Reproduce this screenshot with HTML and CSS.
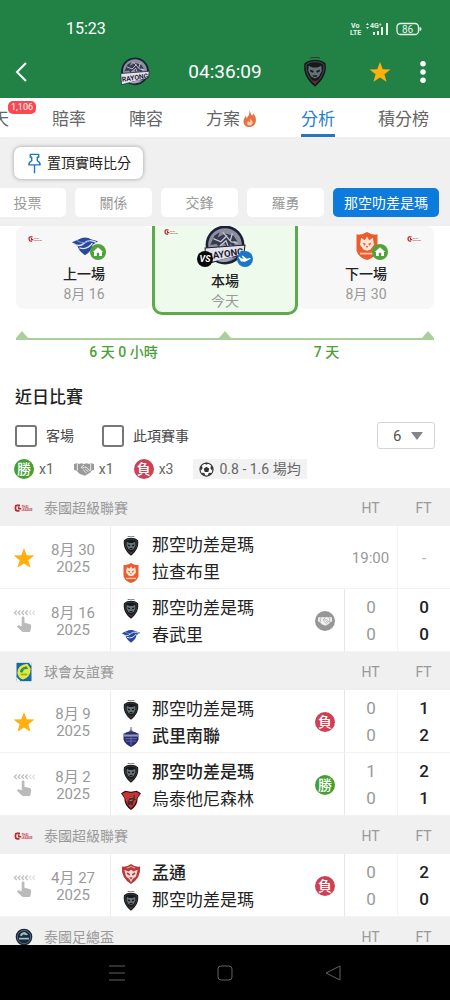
FILE: index.html
```html
<!DOCTYPE html>
<html lang="zh-Hant">

<head>
    <meta charset="UTF-8">
    <meta name="viewport" content="width=device-width, initial-scale=1">
    <title>分析</title>
    <link rel="stylesheet" href="styles.css">
</head>

<body>
    <!-- Icon sprite -->
    <svg class="sprite" aria-hidden="true">
        <symbol id="star" viewBox="0 0 24 24">
            <path fill="#ffb010" d="M12 1l3 7.900 8.400.400-6.600 5.200 2.300 8.200-7.100-4.700-7.100 4.700 2.300-8.200L.6 9.300l8.400-.4z" />
        </symbol>
        <symbol id="swipe" viewBox="0 0 24 24">
            <path fill="none" stroke="#bdbdbd" stroke-width="1.3" d="M4 .5L1.500 3 4 5.500M8 .5L5.500 3 8 5.500M12 .5L9.500 3 12 5.500M16 .5L13.500 3 16 5.500" />
            <path fill="none" stroke="#dedede" stroke-width="1.3" d="M20 .5L17.500 3 20 5.500M24 .5L21.500 3 24 5.500" />
            <path fill="#bababa" d="M9.500 8.500c0-2 3-2 3 0V14l5.500 1.300c1.500.4 2 1.200 1.800 2.700l-.7 4.500c-.2 1-.8 1.500-1.800 1.500h-6c-.8 0-1.300-.2-1.900-.8L4.200 18l.9-.9c.5-.5 1-.5 1.600-.3l2.800.8z" />
        </symbol>
        <symbol id="cobra" viewBox="0 0 24 24">
            <path fill="none" stroke="#333" stroke-width=".8" d="M8 .8q4-1.200 8 0" />
            <path fill="#15191b" d="M12 2.200c3 0 6.500 1 8.500 3 1 7-1.500 13-8.500 18.500C5 18.200 2.500 12.200 3.500 5.200c2-2 5.500-3 8.500-3z" />
            <path fill="none" stroke="#60686c" stroke-width=".5" d="M12 3.800c2.700 0 5.500.8 7 2.200.6 5.500-1.500 10.500-7 15.500C6.500 16.500 4.400 11.500 5 6c1.500-1.400 4.300-2.200 7-2.200z" />
            <path fill="#667176" d="M7 7l3 1.400h4L17 7l.4 4-2.200 4.500-3.200 1.600-3.200-1.600L6.600 11z" />
            <path fill="#15191b" d="M8 10l3 1.200-.6 1.300-2-.7zM16 10l-3 1.200.6 1.300 2-.7zM10 14.500h4l-.8 1.300h-2.400z" />
            <path fill="#b32b25" d="M9.500 18L12 19.500l2.500-1.500-2.500 2.800z" />
        </symbol>
        <symbol id="rayong" viewBox="0 0 40 40">
            <circle cx="20" cy="19" r="18.500" fill="#1b2039" />
            <circle cx="20" cy="19" r="16" fill="#8d8f9d" />
            <path fill="#363a52" d="M6 19l4-9 5-3-2 5 7-4 8 2 4 6-4-1 2 7-5-4-2 5-4-6-5 4-2-3z" />
            <path fill="none" stroke="#c9cad2" stroke-width="1.2" d="M9 13l7 3 6-6M18 7l8 9 6 1M15 20l6-5 3 8M27 8l-2 7" />
            <path fill="#e4e4ea" stroke="#1b2039" d="M1 22l38-3-1 9-36 9z" />
            <text x="3" y="33" class="crest-word" fill="#1b2039" transform="rotate(-8 3 33)">RAYONG</text>
            <path fill="#a2a4b0" d="M12 34q8-2 16-4-6 8-16 4z" />
        </symbol>
        <symbol id="chonburi" viewBox="0 0 30 24">
            <path fill="#2b489b" d="M8 5q7-4 14 0l7 2-6 4q0 6-8 11-7-5-8-10L1 8z" />
            <path fill="none" stroke="#dbe6fa" stroke-width="1.5" d="M2 9q7 5 12 0t13-1M9 14q8 3 14-5" />
            <path fill="none" stroke="#75a3df" stroke-width="1.2" d="M6 6q8 5 14 0" />
        </symbol>
        <symbol id="ratchaburi" viewBox="0 0 24 24">
            <path fill="#e95d31" d="M12 0q5 3 9 2v14q-2 6-9 8-7-2-9-8V2q4 1 9-2z" />
            <path fill="#ffe6d7" d="M7 5l3 2 2-3 2 3 3-2 1 6-3 4-3 1-3-1-3-4z" />
            <path fill="#e95d31" d="M8 9l3 1-1 2zM16 9l-3 1 1 2zM11 12h2l-1 2z" />
            <path stroke="#f8c4ab" stroke-width="1.5" d="M6 18.500h12" />
        </symbol>
        <symbol id="buriram" viewBox="0 0 24 24">
            <path stroke="#7c7f9d" stroke-width="1.4" d="M12 0v8" />
            <path fill="#7c7f9d" d="M9 6l3-4 3 4z" />
            <path fill="#292f72" d="M3 8q9-6 18 0v7q-2 6-9 9-7-3-9-9z" />
            <path fill="#9498bd" d="M3 9h18v2.500H3z" />
            <path fill="none" stroke="#7778a8" d="M5 14h14M6 17h12M12 12v10" />
        </symbol>
        <symbol id="uthai" viewBox="0 0 24 24">
            <path fill="#2c1717" d="M0 4l5-3 7 1 7-1 5 3-4 6q0 9-8 14-8-5-8-14z" />
            <path fill="#d22f35" d="M1.500 4.500L6 2.500l6 1 6-1 4.500 2L19 10q-1 7-7 12-6-5-7-12z" />
            <path fill="#4a2a26" d="M8 14l3-6 6-2-1 4 2 1-3 2-1 6-3-2-3 2z" />
            <path stroke="#a58669" stroke-width="1.2" d="M11 9l4-1M10 13l4-1" />
        </symbol>
        <symbol id="muangthong" viewBox="0 0 24 24">
            <path fill="#b93a38" d="M1 3q6 1 11-3 5 4 11 3 1 14-11 21Q0 17 1 3z" />
            <path fill="#f3dcd8" d="M4 7l5 2 3-2 3 2 5-2-2 8-4 3-2 4-2-4-4-3z" />
            <path fill="#b93a38" d="M7 10l4 2-1 2-3-2zM17 10l-4 2 1 2 3-2zM10 16h4l-2 3z" />
            <path stroke="#eba39c" stroke-width="1.2" d="M7 5l5-2 5 2" fill="none" />
        </symbol>
        <symbol id="thai-league" viewBox="0 0 40 16">
            <path fill="none" stroke="#b72a35" stroke-width="3.5" d="M12 2.500H6q-3 0-3 3v4q0 4 4 4h4" />
            <path fill="#b72a35" d="M8 5h3v3h3v3H8z" />
            <text x="15" y="8" class="league-word" fill="#c14049">THAI</text>
            <text x="15" y="14" class="league-word" fill="#c14049">LEAGUE</text>
        </symbol>
        <symbol id="friendly" viewBox="0 0 20 24">
            <path fill="#1866ab" d="M1 1h18v22H1z" />
            <path fill="#dfeb35" d="M2 13Q2 3 14 2l4 6q0 10-9 13-6-1-7-8z" />
            <path fill="#378d69" d="M5 12q1-6 8-7l2 3-5 1-2 4z" />
            <path fill="#8fae3f" d="M6 14h8v2H6z" />
            <path fill="#fff" d="M1 18l5 5H1zM16 1h3v4z" />
        </symbol>
        <symbol id="fa-cup" viewBox="0 0 24 24">
            <circle cx="12" cy="12" r="10" fill="#18293a" />
            <circle cx="12" cy="12" r="8" fill="none" stroke="#587181" />
            <path fill="#9dbbc7" d="M7 10q2-4 6-4l4 3-2 1-4-1-2 2zM6 13h12v2H6z" />
        </symbol>
        <symbol id="handshake" viewBox="0 0 24 16">
            <path fill="currentColor" d="M0 2l4-1 1 1 4-1 3 1 3-1 4 1 1-1 4 1v7l-3 1-1 2-2 1-1 1-2 1-2 1-3-1-3-1-4-4-3-1z" />
            <path class="handshake-line" fill="none" d="M4 2v8M20 2v8M12 3L8.500 6q1.500 2 4 0l2-.5 5 5M11 9l4 4M13.500 8l4 3.500" />
        </symbol>
        <symbol id="house" viewBox="0 0 20 20">
            <circle cx="10" cy="10" r="10" fill="#50a33a" />
            <path fill="#fff" d="M10 4l6.500 6H15v5h-3.500v-4h-3v4H5v-5H3.500z" />
        </symbol>
        <symbol id="plane" viewBox="0 0 20 20">
            <circle cx="10" cy="10" r="10" fill="#1976ca" />
            <path fill="#fff" d="M3 7l2 2.200 3 .4L5.500 6l2-.2 4.500 4 3.500-1q2-.2 1.500 1.200l-7 3.500-5-.5L2 8z" />
        </symbol>
        <symbol id="versus" viewBox="0 0 20 20">
            <circle cx="10" cy="10" r="10" fill="#080808" />
            <text x="10" y="14" class="versus-word" fill="#fff">VS</text>
        </symbol>
        <symbol id="fire" viewBox="0 0 20 24">
            <path fill="#e96f45" d="M9 0c2 3 1 5 4 8 1-1 1-2 1-3 4 3 5 8 4 12-1 5-5 7-9 7-5 0-9-4-8-9 0-3 2-4 3-7 1 1 1 2 1 4 3-3 5-7 4-12z" />
            <path fill="#ffd0a5" d="M10 12c3 3 5 5 3 8-2 3-7 2-7-1 0-2 1-3 2-4 0 1 0 2 1 2 1-1 2-3 1-5z" />
        </symbol>
        <symbol id="pin" viewBox="0 0 20 30">
            <path fill="none" stroke="#1c78c5" stroke-width="2" stroke-linejoin="round" d="M4 2h12v4h-2v5q4 2 4 6H2q0-4 4-6V6H4zM10 17v12" />
        </symbol>
        <symbol id="football" viewBox="0 0 24 24">
            <circle cx="12" cy="12" r="10.500" fill="#fff" stroke="#333" stroke-width="1.8" />
            <path fill="#333" d="M12 7.500l4.500 3.300-1.700 5.200H9.200l-1.700-5.200zM8 2l4 2.500L16 2l-4-1zM1.500 9l1.200 5 3-3.500L5 6zM22.500 9l-1.200 5-3-3.500L19 6zM5 19.500l5 2-1.500-4-4-.5zM19 19.500l-5 2 1.500-4 4-.5z" />
        </symbol>
    </svg>

    <header class="top">
        <div class="status">
            <span class="clock">15:23</span>
            <svg class="signal" viewBox="0 0 72 14" role="img" aria-label="Vo LTE 4G 86">
                <g fill="#e8f4ec">
                    <text x="1" y="6" class="status-small">Vo</text>
                    <text x="0" y="13" class="status-small">LTE</text>
                    <path d="M16 3l1.500-2L19 3zM16 5l1.500 2L19 5z" />
                    <text x="20" y="6" class="status-small">4G⁺</text>
                    <path d="M23 10h2v3h-2zM27 9h2v4h-2zM31 5h2v8h-2zM36 1h2v12h-2z" />
                    <path d="M69.500 5q2 0 2 2t-2 2z" />
                    <text x="57.500" y="10.500" class="status-level">86</text>
                </g>
                <rect x="47" y="1.500" width="21.500" height="11" rx="3.500" fill="none" stroke="#e8f4ec" stroke-width="1.3" />
            </svg>
        </div>
        <div class="appbar">
            <button class="icon-btn back" aria-label="返回">
                <svg viewBox="0 0 12 20"><path fill="none" stroke="#fff" stroke-width="2" d="M11 1L2 10l9 9" /></svg>
            </button>
            <div class="versus">
                <svg class="crest-top"><use href="#rayong" /></svg>
                <span class="countdown">04:36:09</span>
                <svg class="crest-top"><use href="#cobra" /></svg>
            </div>
            <button class="icon-btn favourite" aria-label="收藏"><svg><use href="#star" /></svg></button>
            <button class="icon-btn more" aria-label="更多">
                <svg viewBox="0 0 6 24" fill="#fff"><circle cx="3" cy="3" r="3" /><circle cx="3" cy="12" r="3" /><circle cx="3" cy="21" r="3" /></svg>
            </button>
        </div>
    </header>

    <nav class="tabs">
        <a href="#">天<span class="count">1,106</span></a>
        <a href="#">賠率</a>
        <a href="#">陣容</a>
        <a href="#">方案<svg class="fire"><use href="#fire" /></svg></a>
        <a href="#" class="current">分析</a>
        <a href="#">積分榜</a>
    </nav>

    <div class="filters">
        <button class="pin-btn"><svg><use href="#pin" /></svg>置頂實時比分</button>
        <div class="chips">
            <button class="chip">投票</button>
            <button class="chip">關係</button>
            <button class="chip">交鋒</button>
            <button class="chip">羅勇</button>
            <button class="chip active">那空叻差是瑪</button>
        </div>
    </div>

    <main>
        <section class="schedule">
            <div class="day">
                <svg class="league left"><use href="#thai-league" /></svg>
                <div class="day-crest"><svg class="crest-day"><use href="#chonburi" /></svg><svg class="venue"><use href="#house" /></svg></div>
                <strong>上一場</strong>
                <span>8月 16</span>
            </div>
            <div class="day today">
                <svg class="league left"><use href="#thai-league" /></svg>
                <div class="day-crest"><svg class="vs-mark"><use href="#versus" /></svg><svg class="crest-today"><use href="#rayong" /></svg><svg class="venue"><use href="#plane" /></svg></div>
                <strong>本場</strong>
                <span>今天</span>
            </div>
            <div class="day">
                <svg class="league right"><use href="#thai-league" /></svg>
                <div class="day-crest"><svg class="crest-day"><use href="#ratchaburi" /></svg><svg class="venue"><use href="#house" /></svg></div>
                <strong>下一場</strong>
                <span>8月 30</span>
            </div>
        </section>
        <div class="timeline"><i></i><i></i><i></i></div>
        <div class="intervals"><span>6 天 0 小時</span><span>7 天</span></div>

        <h2>近日比賽</h2>
        <div class="options">
            <label><input type="checkbox">客場</label>
            <label><input type="checkbox">此項賽事</label>
            <div class="amount">
                <select aria-label="場數">
                    <option>6</option>
                    <option>10</option>
                </select>
                <svg viewBox="0 0 12 8"><path fill="#858585" d="M0 0h12L6 8z" /></svg>
            </div>
        </div>
        <div class="summary">
            <span><b class="result win">勝</b>x1</span>
            <span><svg class="draws"><use href="#handshake" /></svg>x1</span>
            <span><b class="result loss">負</b>x3</span>
            <span class="average"><svg><use href="#football" /></svg>0.8 - 1.6 場均</span>
        </div>

        <table>
            <colgroup>
                <col class="col-mark">
                <col class="col-date">
                <col>
                <col class="col-result">
                <col class="col-score">
                <col class="col-score">
            </colgroup>
            <tbody>
                <tr class="group">
                    <th colspan="4"><div><svg><use href="#thai-league" /></svg>泰國超級聯賽</div></th>
                    <th>HT</th>
                    <th>FT</th>
                </tr>
                <tr>
                    <td class="mark"><svg><use href="#star" /></svg></td>
                    <td class="date">8月 30<br>2025</td>
                    <td colspan="2" class="teams">
                        <div><svg><use href="#cobra" /></svg>那空叻差是瑪</div>
                        <div><svg><use href="#ratchaburi" /></svg>拉查布里</div>
                    </td>
                    <td class="kickoff">19:00</td>
                    <td class="ft none">-</td>
                </tr>
                <tr>
                    <td class="mark"><svg><use href="#swipe" /></svg></td>
                    <td class="date">8月 16<br>2025</td>
                    <td class="teams">
                        <div><svg><use href="#cobra" /></svg>那空叻差是瑪</div>
                        <div><svg><use href="#chonburi" /></svg>春武里</div>
                    </td>
                    <td><b class="result draw"><svg><use href="#handshake" /></svg></b></td>
                    <td class="ht">0<br>0</td>
                    <td class="ft">0<br>0</td>
                </tr>
                <tr class="group">
                    <th colspan="4"><div><svg><use href="#friendly" /></svg>球會友誼賽</div></th>
                    <th>HT</th>
                    <th>FT</th>
                </tr>
                <tr>
                    <td class="mark"><svg><use href="#star" /></svg></td>
                    <td class="date">8月 9<br>2025</td>
                    <td class="teams">
                        <div><svg><use href="#cobra" /></svg>那空叻差是瑪</div>
                        <div class="winner"><svg><use href="#buriram" /></svg>武里南聯</div>
                    </td>
                    <td><b class="result loss">負</b></td>
                    <td class="ht">0<br>0</td>
                    <td class="ft">1<br>2</td>
                </tr>
                <tr>
                    <td class="mark"><svg><use href="#swipe" /></svg></td>
                    <td class="date">8月 2<br>2025</td>
                    <td class="teams">
                        <div class="winner"><svg><use href="#cobra" /></svg>那空叻差是瑪</div>
                        <div><svg><use href="#uthai" /></svg>烏泰他尼森林</div>
                    </td>
                    <td><b class="result win">勝</b></td>
                    <td class="ht">1<br>0</td>
                    <td class="ft">2<br>1</td>
                </tr>
                <tr class="group">
                    <th colspan="4"><div><svg><use href="#thai-league" /></svg>泰國超級聯賽</div></th>
                    <th>HT</th>
                    <th>FT</th>
                </tr>
                <tr>
                    <td class="mark"><svg><use href="#swipe" /></svg></td>
                    <td class="date">4月 27<br>2025</td>
                    <td class="teams">
                        <div class="winner"><svg><use href="#muangthong" /></svg>孟通</div>
                        <div><svg><use href="#cobra" /></svg>那空叻差是瑪</div>
                    </td>
                    <td><b class="result loss">負</b></td>
                    <td class="ht">0<br>0</td>
                    <td class="ft">2<br>0</td>
                </tr>
                <tr class="group">
                    <th colspan="4"><div><svg><use href="#fa-cup" /></svg>泰國足總盃</div></th>
                    <th>HT</th>
                    <th>FT</th>
                </tr>
            </tbody>
        </table>
    </main>

    <footer class="system">
        <button class="icon-btn" aria-label="選單"><svg viewBox="0 0 16 16"><path d="M0 1h16M0 8h16M0 15h16" /></svg></button>
        <button class="icon-btn" aria-label="主畫面"><svg viewBox="0 0 16 16"><rect x="1" y="1" width="14" height="14" rx="3" /></svg></button>
        <button class="icon-btn" aria-label="返回"><svg viewBox="0 0 16 16"><path stroke-linejoin="round" d="M15 1v14L1 8z" /></svg></button>
    </footer>
</body>

</html>
```
FILE: styles.css
```css
:root {
    --green: #228246;
    --win: #45a033;
    --loss: #cf4055;
    --blue: #0d7bdb;
    --grey: #f0f0f0;
    --muted: #999;
    --text: #222;
}

* {
    margin: 0;
    padding: 0;
    box-sizing: border-box;
}

body {
    display: flex;
    flex-direction: column;
    height: 100vh;
    overflow: hidden;
    font-family: Roboto, "Noto Sans CJK TC", sans-serif;
    font-size: 14px;
    line-height: 20px;
    color: var(--text);
    background: #fff;
}

button,
select {
    font: inherit;
    color: inherit;
    border: none;
    background: none;
}

svg {
    display: block;
    flex: none;
}

.sprite {
    position: absolute;
    width: 0;
    height: 0;
}

/* Words inside the logos */
.crest-word {
    font: 700 9px Roboto, sans-serif;
}

.league-word {
    font: 700 6px Roboto, sans-serif;
}

.versus-word {
    font: italic 700 11px Roboto, sans-serif;
    text-anchor: middle;
}

.status-small {
    font: 700 7px Roboto, sans-serif;
}

.status-level {
    font: 400 10px Roboto, sans-serif;
    text-anchor: middle;
}

.handshake-line {
    stroke: var(--line, #fff);
}

/* Header */
.top {
    flex: none;
    color: #fff;
    background: var(--green);
}

.status {
    display: flex;
    align-items: center;
    justify-content: space-between;
    padding: 19px 28px 7px 66px;
}

.clock {
    font-size: 16px;
}

.signal {
    width: 72px;
    height: 14px;
}

.appbar {
    display: flex;
    align-items: center;
    height: 52px;
    padding: 0 24px 0 15px;
}

.icon-btn {
    display: flex;
    align-items: center;
    justify-content: center;
}

.back svg {
    width: 12px;
    height: 20px;
}

.versus {
    flex: 1;
    display: flex;
    align-items: center;
    justify-content: center;
    gap: 38px;
    padding-left: 54px;
}

.crest-top {
    width: 30px;
    height: 30px;
}

.countdown {
    font-size: 19px;
}

.favourite {
    margin-right: 29px;
}

.favourite svg {
    width: 22px;
    height: 22px;
}

.more svg {
    width: 6px;
    height: 22px;
}

/* Tabs */
.tabs {
    flex: none;
    display: flex;
    gap: 43px;
    height: 39px;
    margin-left: -8px;
}

.tabs a {
    position: relative;
    flex: none;
    display: flex;
    align-items: center;
    gap: 2px;
    padding-top: 5px;
    border-bottom: 3px solid transparent;
    font-size: 17px;
    color: #666;
    text-decoration: none;
}

.tabs .current {
    color: #2580d0;
    border-color: #2a76bc;
}

.count {
    position: absolute;
    top: 3px;
    left: 16px;
    padding: 0 3px;
    border-radius: 5px;
    font-size: 9px;
    line-height: 13px;
    color: #fff;
    background: #fa4850;
}

.fire {
    width: 16px;
    height: 17px;
}

/* Pin button and chips */
.filters {
    flex: none;
    padding: 10px 0 9px 14px;
    overflow: hidden;
    background: var(--grey);
}

.pin-btn {
    display: flex;
    align-items: center;
    gap: 5px;
    height: 32px;
    padding: 0 12px 0 13px;
    border-radius: 7px;
    background: #fff;
    box-shadow: 0 0 4px rgba(0, 0, 0, 0.35);
}

.pin-btn svg {
    width: 15px;
    height: 21px;
}

.chips {
    display: flex;
    gap: 9px;
    margin: 9px 0 0 -25px;
}

.chip {
    flex: none;
    min-width: 77px;
    height: 29px;
    padding: 0 11px;
    border-radius: 5px;
    color: var(--muted);
    background: #fff;
}

.chip.active {
    color: #fff;
    background: var(--blue);
}

/* Schedule */
main {
    flex: 1;
    min-height: 0;
    overflow: hidden;
}

.schedule {
    display: grid;
    grid-template-columns: 1fr 146px 1fr;
    align-items: start;
    padding: 0 16px;
}

.day {
    position: relative;
    display: flex;
    flex-direction: column;
    align-items: center;
    padding: 7px 0 5px;
    border-radius: 8px;
    background: #f7f7f7;
}

.day strong {
    font-weight: 500;
}

.day > span {
    color: var(--muted);
}

.today {
    padding: 0 0 1px;
    border: 3px solid #5caa48;
    border-top: none;
    border-radius: 0 0 10px 10px;
    background: #eefaeb;
}

.day-crest {
    display: flex;
    align-items: flex-end;
    height: 31px;
    padding-bottom: 4px;
}

.crest-day {
    width: 28px;
    height: 28px;
    margin: 0 -9px 0 9px;
}

.crest-today {
    width: 42px;
    height: 42px;
    margin: 0 -9px;
}

.today .day-crest {
    height: 45px;
}

.venue,
.vs-mark {
    position: relative;
    width: 16px;
    height: 16px;
}

.league {
    position: absolute;
    top: 10px;
    width: 15px;
    height: 6px;
}

.league.left {
    left: 12px;
}

.league.right {
    right: 12px;
}

.today .league {
    top: 3px;
    left: 9px;
}

.timeline {
    display: flex;
    justify-content: space-between;
    margin: 16px 16px 0;
    border-bottom: 2px solid #a9cf9b;
}

.timeline i {
    width: 12px;
    height: 7px;
    background: #a9cf9b;
    clip-path: polygon(50% 0, 100% 100%, 0 100%);
}

.intervals {
    display: grid;
    grid-template-columns: 1fr 1fr;
    margin: 2px 22px 0;
    font-weight: 500;
    text-align: center;
    color: #4c9f38;
}

/* Recent matches */
h2 {
    margin: 23px 15px 0;
    font-size: 17px;
    font-weight: 500;
    line-height: 24px;
}

.options {
    display: flex;
    align-items: center;
    gap: 28px;
    margin: 13px 15px 0;
    color: #444;
}

.options label {
    display: flex;
    align-items: center;
    gap: 9px;
}

.options input {
    appearance: none;
    width: 22px;
    height: 22px;
    border: 2px solid #777;
    border-radius: 3px;
}

.amount {
    position: relative;
    margin-left: auto;
}

.amount select {
    display: block;
    appearance: none;
    width: 58px;
    height: 27px;
    padding-left: 15px;
    border: 1px solid #d4d4d4;
    border-radius: 3px;
    font-size: 15px;
    color: #555;
}

.amount svg {
    position: absolute;
    top: 10px;
    right: 12px;
    width: 12px;
    height: 8px;
    pointer-events: none;
}

.summary {
    display: flex;
    gap: 20px;
    margin: 10px 14px 9px;
    color: #666;
}

.summary span {
    display: flex;
    align-items: center;
    gap: 5px;
}

.summary .average {
    padding: 0 6px;
    background: #f2f2f2;
}

.average svg {
    width: 15px;
    height: 15px;
}

.draws {
    width: 20px;
    height: 14px;
    color: #999;
}

.result {
    display: flex;
    align-items: center;
    justify-content: center;
    width: 20px;
    height: 20px;
    margin: 0 auto;
    border-radius: 50%;
    font-weight: 500;
    color: #fff;
}

.win {
    background: var(--win);
}

.loss {
    background: var(--loss);
}

.draw {
    --line: #969696;
    background: #969696;
}

.draw svg {
    width: 14px;
    height: 10px;
    color: #eee;
}

/* Results table */
table {
    width: 100%;
    table-layout: fixed;
    border-collapse: separate;
    border-spacing: 0;
}

.col-mark {
    width: 36px;
}

.col-date {
    width: 75px;
}

.col-result {
    width: 38px;
}

.col-score {
    width: 53px;
}

th {
    height: 38px;
    padding-top: 2px;
    font-weight: 400;
    color: var(--muted);
    background: var(--grey);
}

th div {
    display: flex;
    align-items: center;
    gap: 10px;
    padding-left: 14px;
}

th svg {
    width: 20px;
    height: 20px;
}

td {
    height: 63px;
    padding-top: 2px;
    border-bottom: 1px solid #f3f3f3;
    text-align: center;
}

.mark {
    padding-left: 12px;
}

.mark svg {
    width: 22px;
    height: 22px;
    margin: 0 auto;
}

.date {
    padding-top: 4px;
    border-right: 1px solid #eee;
    font-size: 15px;
    line-height: 17px;
    color: var(--muted);
}

.teams {
    padding: 4px 0 0 10px;
    font-size: 17px;
    line-height: 27px;
}

.teams div {
    display: flex;
    align-items: center;
    gap: 11px;
    white-space: nowrap;
}

.teams svg {
    width: 20px;
    height: 20px;
}

.winner {
    font-weight: 500;
}

.kickoff {
    font-size: 15px;
    color: var(--muted);
}

.ht,
.ft {
    font-size: 17px;
    line-height: 27px;
}

.ht {
    border-left: 1px solid #e6e6e6;
    color: var(--muted);
}

.ft {
    border-left: 1px solid #f3f3f3;
    font-weight: 500;
}

.ft.none {
    font-weight: 400;
    color: #bbb;
}

/* System bar */
.system {
    flex: none;
    display: flex;
    align-items: center;
    justify-content: center;
    gap: 92px;
    height: 55px;
    background: #000;
}

.system svg {
    width: 16px;
    height: 16px;
    fill: none;
    stroke: #626262;
    stroke-width: 1;
}
```
